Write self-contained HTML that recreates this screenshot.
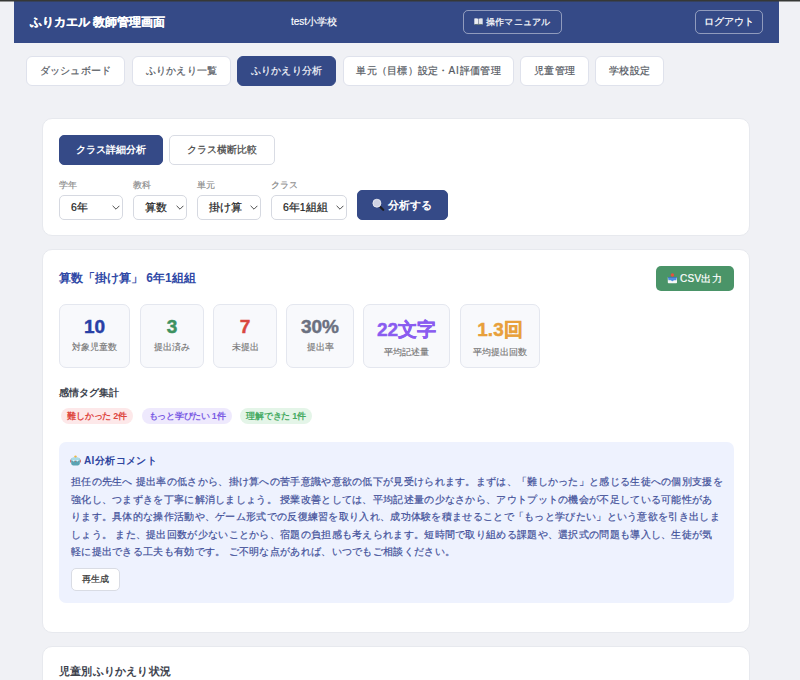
<!DOCTYPE html>
<html lang="ja"><head><meta charset="utf-8">
<style>
*{box-sizing:border-box;margin:0;padding:0}
html,body{width:800px;height:680px;overflow:hidden;background:#f0f1f5;font-family:"Liberation Sans",sans-serif;color:#333}
.abs{position:absolute}
.rs{-webkit-text-stroke:.2px currentColor}
.topbar{position:absolute;left:0;top:0;width:800px;height:2px;z-index:5;background:linear-gradient(#363836 0,#363836 1px,rgba(54,56,54,.5) 1px,rgba(54,56,54,.5) 2px)}
.header{position:absolute;left:14px;top:1px;width:765px;height:42px;background:#354a87}
.h-title{position:absolute;left:30px;top:14px;font-size:12px;font-weight:bold;color:#fff;white-space:nowrap;line-height:16px;-webkit-text-stroke:.15px currentColor}
.h-school{position:absolute;left:291px;top:15px;font-size:10px;color:#fff;white-space:nowrap;line-height:13px;-webkit-text-stroke:.15px currentColor}
.hbtn{position:absolute;top:10px;height:24px;border:1px solid rgba(255,255,255,.45);border-radius:5px;color:#fff;font-size:10px;line-height:22px;text-align:center;white-space:nowrap;-webkit-text-stroke:.2px currentColor}
.tab{position:absolute;top:56px;height:30px;border:1px solid #dfe2ec;border-radius:6px;background:#fff;color:#555a63;font-size:10px;letter-spacing:.25px;line-height:28px;text-align:center;white-space:nowrap;-webkit-text-stroke:.2px currentColor}
.tab.on{background:#354a87;border-color:#354a87;color:#f4f5fa}
.card{position:absolute;left:42px;width:708px;background:#fff;border:1px solid #e7e9ee;border-radius:10px}
.btn{position:absolute;height:30px;border-radius:5px;font-size:10px;line-height:28px;text-align:center;white-space:nowrap;border:1px solid #d9dce4;background:#fff;color:#444;-webkit-text-stroke:.2px currentColor}
.btn.on{background:#354a87;border-color:#354a87;color:#fff;font-weight:bold;-webkit-text-stroke:0}
.lbl{position:absolute;top:179px;font-size:9px;color:#888;line-height:12px;white-space:nowrap;-webkit-text-stroke:.15px currentColor}
.sel{position:absolute;top:195px;height:25px;border:1px solid #d6d9e1;border-radius:5px;background:#fff;font-size:10.5px;color:#222;line-height:23px;white-space:nowrap;padding-left:11px;-webkit-text-stroke:.2px currentColor}
.sel svg{position:absolute;right:2px;top:9px}
.stat{position:absolute;top:304px;height:64px;background:#f8f9fc;border:1px solid #e4e7ef;border-radius:7px;text-align:center}
.stat .n{position:absolute;left:0;right:0;top:11px;font-size:19px;font-weight:bold;line-height:22px;white-space:nowrap;-webkit-text-stroke:.45px currentColor}
.stat .l{position:absolute;left:0;right:0;top:36px;font-size:9px;color:#777;line-height:12px;white-space:nowrap;-webkit-text-stroke:.15px currentColor}
.stat.t .n{top:14px}.stat.t .l{top:41px}
.tag{position:absolute;top:408px;height:16px;border-radius:8px;font-size:9px;letter-spacing:-.3px;font-weight:bold;line-height:16px;text-align:center;white-space:nowrap}
.ai{position:absolute;left:59px;top:442px;width:675px;height:161px;background:#eef2fe;border-radius:7px}
.ai-t{position:absolute;left:25px;top:12px;font-size:10px;letter-spacing:.4px;font-weight:bold;color:#2e459e;line-height:14px;white-space:nowrap}
.ai-b{position:absolute;left:12px;top:31px;font-size:10px;letter-spacing:.3px;color:#43519a;line-height:17.6px;white-space:nowrap;-webkit-text-stroke:.2px currentColor}
</style></head><body>
<div class="topbar"></div>
<div class="header"></div>
<div class="h-title">ふりカエル 教師管理画面</div>
<div class="h-school">test小学校</div>
<div class="hbtn" style="left:463px;width:99px;font-size:9px;letter-spacing:.2px;text-align:left;padding-left:22px">操作マニュアル</div>
<svg class="abs" style="left:474px;top:18px" width="9" height="7" viewBox="0 0 9 7"><path d="M0.3 0.6Q2.3 0 4.3 0.8V6.6Q2.3 5.9 0.3 6.4Z" fill="#eceef3"/><path d="M8.7 0.6Q6.7 0 4.7 0.8V6.6Q6.7 5.9 8.7 6.4Z" fill="#e2e4ea"/><path d="M4.5 0.8V6.7" stroke="#9a9ca8" stroke-width=".5"/><path d="M0.5 6.6Q4.5 6 8.5 6.6" stroke="#556b55" stroke-width=".6" fill="none"/></svg>
<div class="hbtn" style="left:695px;width:68px">ログアウト</div>

<div class="tab" style="left:26px;width:99px">ダッシュボード</div>
<div class="tab" style="left:132px;width:99px">ふりかえり一覧</div>
<div class="tab on" style="left:237px;width:99px">ふりかえり分析</div>
<div class="tab" style="left:343px;width:171px">単元（目標）設定・<span style="letter-spacing:.9px">AI</span>評価管理</div>
<div class="tab" style="left:520px;width:69px">児童管理</div>
<div class="tab" style="left:595px;width:69px">学校設定</div>

<div class="card" style="top:118px;height:118px"></div>
<div class="btn on" style="left:59px;top:135px;width:104px">クラス詳細分析</div>
<div class="btn" style="left:169px;top:135px;width:106px">クラス横断比較</div>
<div class="lbl" style="left:59px">学年</div>
<div class="lbl" style="left:133px">教科</div>
<div class="lbl" style="left:197px">単元</div>
<div class="lbl" style="left:271px">クラス</div>
<div class="sel" style="left:59px;width:64px">6年<svg width="8" height="5" viewBox="0 0 8 5"><path d="M.6 .8L4 4.2 7.4 .8" fill="none" stroke="#3a3a3a" stroke-width=".9"/></svg></div>
<div class="sel" style="left:133px;width:54px">算数<svg width="8" height="5" viewBox="0 0 8 5"><path d="M.6 .8L4 4.2 7.4 .8" fill="none" stroke="#3a3a3a" stroke-width=".9"/></svg></div>
<div class="sel" style="left:197px;width:64px">掛け算<svg width="8" height="5" viewBox="0 0 8 5"><path d="M.6 .8L4 4.2 7.4 .8" fill="none" stroke="#3a3a3a" stroke-width=".9"/></svg></div>
<div class="sel" style="left:271px;width:76px">6年1組組<svg width="8" height="5" viewBox="0 0 8 5"><path d="M.6 .8L4 4.2 7.4 .8" fill="none" stroke="#3a3a3a" stroke-width=".9"/></svg></div>
<div class="btn on" style="left:357px;top:190px;width:91px;font-size:11px;text-align:left;padding-left:30px">分析する</div>
<svg class="abs" style="left:372px;top:198px" width="13" height="13" viewBox="0 0 13 13"><path d="M7.6 8.2L11.2 11.8" stroke="#1e1e22" stroke-width="2.2" stroke-linecap="round"/><circle cx="4.9" cy="5.2" r="4" fill="#cfd3e3" stroke="#f2f3f7" stroke-width=".8"/></svg>

<div class="card" style="top:249px;height:384px"></div>
<div class="abs" style="left:59px;top:270px;font-size:12px;font-weight:bold;color:#3049a6;line-height:16px;white-space:nowrap">算数「掛け算」 6年1組組</div>
<div class="btn" style="left:656px;top:266px;width:78px;height:25px;line-height:25px;border:0;background:#4a9468;color:#fff;font-size:10px;letter-spacing:.3px;text-align:left;padding-left:24px">CSV出力</div>
<svg class="abs" style="left:667px;top:272px" width="11" height="12" viewBox="0 0 11 12"><path d="M0.8 5.2H10V10.5Q10 11.3 9.2 11.3H1.6Q0.8 11.3 0.8 10.5Z" fill="#f7f7f5"/><path d="M1 5.2H9.8L9.4 8.3H6.8Q5.4 10 4 8.3H1.4Z" fill="#4f8fe0"/><path d="M1 5.2H9.8V6H1Z" fill="#3a6bb8"/><circle cx="5.4" cy="3" r="1.7" fill="#e8503f"/></svg>

<div class="stat" style="left:59px;width:71px"><div class="n" style="color:#2940a6">10</div><div class="l">対象児童数</div></div>
<div class="stat" style="left:140px;width:64px"><div class="n" style="color:#3d9160">3</div><div class="l">提出済み</div></div>
<div class="stat" style="left:213px;width:64px"><div class="n" style="color:#d9473f">7</div><div class="l">未提出</div></div>
<div class="stat" style="left:286px;width:68px"><div class="n" style="color:#6b7080">30%</div><div class="l">提出率</div></div>
<div class="stat t" style="left:363px;width:87px"><div class="n" style="color:#8a5cf0">22文字</div><div class="l">平均記述量</div></div>
<div class="stat t" style="left:460px;width:80px"><div class="n" style="color:#e8a03a">1.3回</div><div class="l">平均提出回数</div></div>

<div class="abs" style="left:59px;top:386px;font-size:10px;font-weight:bold;color:#40454f;line-height:14px;white-space:nowrap">感情タグ集計</div>
<div class="tag" style="left:61px;width:72px;background:#fde8e9;color:#de463f">難しかった 2件</div>
<div class="tag" style="left:142px;width:90px;background:#eee9fd;color:#7b5be4">もっと学びたい 1件</div>
<div class="tag" style="left:240px;width:72px;background:#e4f5e8;color:#45aa62">理解できた 1件</div>

<div class="ai">
<svg class="abs" style="left:11px;top:13px" width="11" height="11" viewBox="0 0 11 11"><circle cx="5.5" cy="1.6" r="1.2" fill="#f0b640"/><rect x="0" y="4.6" width="1.6" height="3" rx=".6" fill="#d07a78"/><rect x="9.4" y="4.6" width="1.6" height="3" rx=".6" fill="#d07a78"/><rect x="1.2" y="2.8" width="8.6" height="7.6" rx="1.8" fill="#5aa3b3"/><rect x="1.2" y="2.8" width="8.6" height="3.2" rx="1.5" fill="#a8dbe6"/><circle cx="3.6" cy="5.8" r=".8" fill="#e8f4f8"/><circle cx="7.4" cy="5.8" r=".8" fill="#e8f4f8"/><path d="M5.5 5.4L6.1 6.8H4.9Z" fill="#d85a4a"/></svg>
<div class="ai-t">AI分析コメント</div>
<div class="ai-b">担任の先生へ 提出率の低さから、掛け算への苦手意識や意欲の低下が見受けられます。まずは、「難しかった」と感じる生徒への個別支援を<br>強化し、つまずきを丁寧に解消しましょう。 授業改善としては、平均記述量の少なさから、アウトプットの機会が不足している可能性があ<br>ります。具体的な操作活動や、ゲーム形式での反復練習を取り入れ、成功体験を積ませることで「もっと学びたい」という意欲を引き出しま<br>しょう。 また、提出回数が少ないことから、宿題の負担感も考えられます。短時間で取り組める課題や、選択式の問題も導入し、生徒が気<br>軽に提出できる工夫も有効です。 ご不明な点があれば、いつでもご相談ください。</div>
<div class="btn" style="left:12px;top:126px;width:49px;height:23px;line-height:21px;font-size:9px;color:#333">再生成</div>
</div>

<div class="card" style="top:646px;height:60px"></div>
<div class="abs" style="left:59px;top:664px;font-size:11px;font-weight:bold;letter-spacing:.2px;color:#3d424d;line-height:14px;white-space:nowrap">児童別ふりかえり状況</div>
</body></html>
